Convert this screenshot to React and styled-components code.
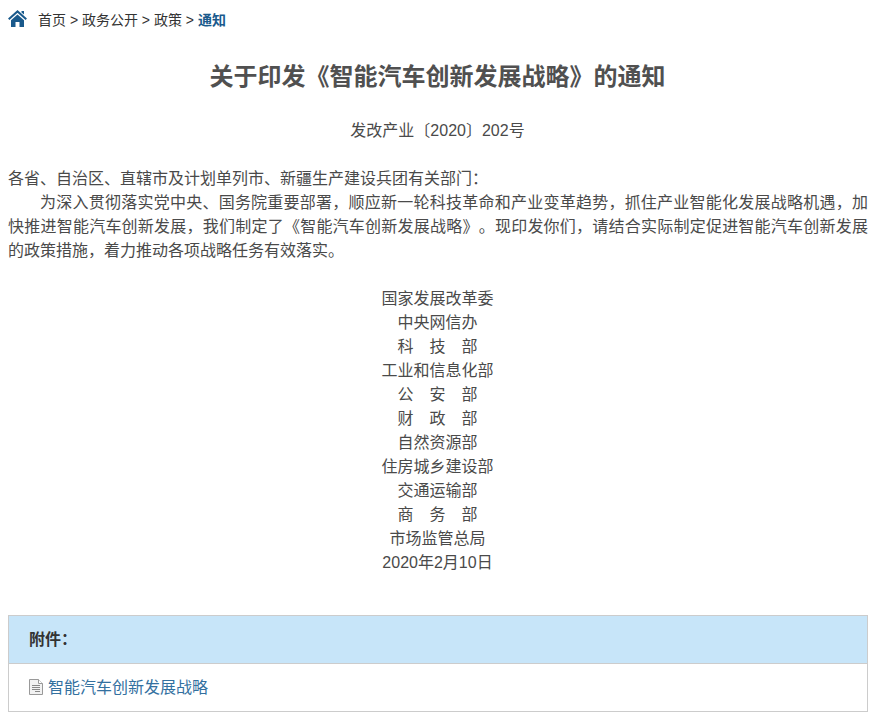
import styled, { createGlobalStyle } from "styled-components"

const GlobalStyle = createGlobalStyle`
	html, body {
		margin: 0;
		padding: 0;
		background: #fff;
	}
	body {
		font-family: "Liberation Sans", "Noto Sans CJK SC", sans-serif;
		color: #4a4a4a;
		text-spacing-trim: space-all;
	}
`

const Page = styled.div`
	width: 860px;
	padding: 0 8px;
	height: 722px;
	overflow: hidden;
`

const Breadcrumb = styled.div`
	display: flex;
	align-items: center;
	height: 37px;
	font-size: 14px;
	color: #333;
`

const HomeIcon = styled.svg`
	width: 19px;
	height: 17px;
	color: #1a5a8c;
	margin-right: 11px;
`

const Current = styled.b`
	color: #1a5a8c;
	margin-left: 4px;
`

const Crumb = styled.span`
	white-space: pre;
`

const Title = styled.h1`
	margin: 22px 0 0;
	padding-right: 1px;
	font-size: 24px;
	line-height: 36px;
	font-weight: bold;
	text-align: center;
	color: #505050;
`

const DocNumber = styled.p`
	margin: 24px 0 0;
	padding-right: 1px;
	font-size: 16px;
	line-height: 24px;
	text-align: center;
`

const Body = styled.div`
	margin-top: 24px;
	font-size: 16px;
	line-height: 24px;
`

const Para = styled.p`
	margin: 0;
	text-align: justify;
	text-indent: ${(p) => (p.$indent ? "2em" : "0")};
`

const Signers = styled.div`
	margin-top: 24px;
	padding-right: 1px;
	text-align: center;
	font-size: 16px;
	line-height: 24px;
`

const Attachments = styled.div`
	margin-top: 40px;
	border: 1px solid #ccc;
`

const AttachHead = styled.div`
	height: 47px;
	line-height: 47px;
	padding-left: 20px;
	background: #c7e5f9;
	border-bottom: 1px solid #ccc;
	font-size: 16px;
	font-weight: bold;
	color: #333;
`

const AttachBody = styled.div`
	display: flex;
	align-items: center;
	height: 44px;
	padding: 0 0 3px 20px;
`

const FileIcon = styled.svg`
	width: 14px;
	height: 16px;
	margin: 2px 5px 0 0;
`

const FileLink = styled.a`
	font-size: 16px;
	color: #33709f;
	text-decoration: none;
`

const signers = [
	"国家发展改革委",
	"中央网信办",
	"科　技　部",
	"工业和信息化部",
	"公　安　部",
	"财　政　部",
	"自然资源部",
	"住房城乡建设部",
	"交通运输部",
	"商　务　部",
	"市场监管总局",
	"2020年2月10日",
]

export default function App() {
	return (
		<Page>
			<GlobalStyle />
			<Breadcrumb>
				<HomeIcon viewBox="0 0 19 17">
					<path d="M0.7 9.2L9.5 1.4L18.3 9.2" fill="none" stroke="currentColor" strokeWidth="2" />
					<path d="M13.5 1H16V4.5L13.5 2.6Z" fill="currentColor" />
					<path d="M3 10.2L9.5 4.6L16 10.2V17H11.5V12H7.5V17H3Z" fill="currentColor" />
				</HomeIcon>
				<Crumb>首页 &gt; 政务公开 &gt; 政策 &gt;</Crumb>
				<Current>通知</Current>
			</Breadcrumb>
			<Title>关于印发《智能汽车创新发展战略》的通知</Title>
			<DocNumber>发改产业〔2020〕202号</DocNumber>
			<Body>
				<Para>各省、自治区、直辖市及计划单列市、新疆生产建设兵团有关部门：</Para>
				<Para $indent>
					为深入贯彻落实党中央、国务院重要部署，顺应新一轮科技革命和产业变革趋势，抓住产业智能化发展战略机遇，加快推进智能汽车创新发展，我们制定了《智能汽车创新发展战略》。现印发你们，请结合实际制定促进智能汽车创新发展的政策措施，着力推动各项战略任务有效落实。
				</Para>
			</Body>
			<Signers>
				{signers.map((s) => (
					<div key={s}>{s}</div>
				))}
			</Signers>
			<Attachments>
				<AttachHead>附件：</AttachHead>
				<AttachBody>
					<FileIcon viewBox="0 0 14 16">
						<path d="M0.5 0.5H9.5L13.5 4.5V15.5H0.5Z" fill="#f2f2f2" stroke="#999" />
						<path d="M9.5 0.5V4.5H13.5" fill="#fff" stroke="#999" />
						<path d="M3 6.5H11M3 8.5H11M3 10.5H11M6 12.5H11" stroke="#888" />
					</FileIcon>
					<FileLink>智能汽车创新发展战略</FileLink>
				</AttachBody>
			</Attachments>
		</Page>
	)
}
